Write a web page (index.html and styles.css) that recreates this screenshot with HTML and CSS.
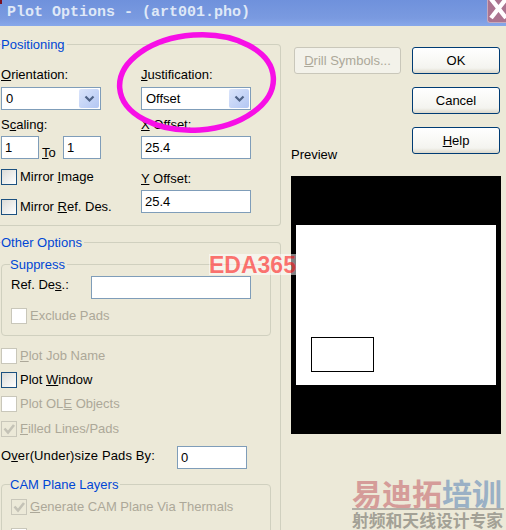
FILE: index.html
```html
<!DOCTYPE html>
<html lang="en">
<head>
<meta charset="utf-8">
<title>Plot Options</title>
<link rel="stylesheet" href="styles.css">
</head>
<body>
<div class="window">
  <header class="titlebar">
    <span class="title">Plot Options - (art001.pho)</span>
    <span class="close"><svg width="19" height="22" viewBox="0 0 19 22"><path d="M3 -1 L18 18 M18 -1 L3 18" stroke="#fff" stroke-width="4.4"/></svg></span>
  </header>
  <main class="content">
    <div class="left">
      <fieldset class="group outer pos">
        <legend>Positioning</legend>
        <div class="pos-grid">
          <div class="col">
            <label class="lbl first"><u>O</u>rientation:</label>
            <div class="select w99 gap-6"><span>0</span><span class="arrow"><svg width="11" height="8" viewBox="0 0 11 8"><path d="M1.5 1.5 L5.5 5.5 L9.5 1.5" fill="none" stroke="#4d6185" stroke-width="2.2"/></svg></span></div>
            <label class="lbl gap-7">S<u>c</u>aling:</label>
            <div class="scale gap-5">
              <div class="input w37">1</div>
              <span class="to"><u>T</u>o</span>
              <div class="input w37">1</div>
            </div>
            <div class="check-row gap-9"><span class="check"></span><span>Mirror <u>I</u>mage</span></div>
            <div class="check-row gap-14"><span class="check"></span><span>Mirror <u>R</u>ef. Des.</span></div>
          </div>
          <div class="col">
            <label class="lbl first"><u>J</u>ustification:</label>
            <div class="select w109 gap-6"><span>Offset</span><span class="arrow"><svg width="11" height="8" viewBox="0 0 11 8"><path d="M1.5 1.5 L5.5 5.5 L9.5 1.5" fill="none" stroke="#4d6185" stroke-width="2.2"/></svg></span></div>
            <label class="lbl gap-7"><u>X</u> Offset:</label>
            <div class="input w109 gap-5">25.4</div>
            <label class="lbl gap-12"><u>Y</u> Offset:</label>
            <div class="input w109 gap-5">25.4</div>
          </div>
        </div>
      </fieldset>
      <fieldset class="group outer other">
        <legend>Other Options</legend>
        <fieldset class="group inner suppress">
          <legend>Suppress</legend>
          <div class="ref-row"><label class="lbl">Ref. De<u>s</u>.:</label><div class="input w159"></div></div>
          <div class="check-row off gap-9"><span class="check"></span><span>Exclude Pads</span></div>
        </fieldset>
        <div class="check-row off gap-12"><span class="check"></span><span><u>P</u>lot Job Name</span></div>
        <div class="check-row gap-8"><span class="check"></span><span>Plot <u>W</u>indow</span></div>
        <div class="check-row off gap-8"><span class="check"></span><span>Plot OL<u>E</u> Objects</span></div>
        <div class="check-row off gap-9"><span class="check"><svg width="14" height="14" viewBox="0 0 14 14"><path d="M2.5 6.5 L6 10.5 L12 3" fill="none" stroke="#c4c2b6" stroke-width="2.6"/></svg></span><span><u>F</u>illed Lines/Pads</span></div>
        <div class="over-row"><label class="lbl">O<u>v</u>er(Under)size Pads By:</label><div class="input w69">0</div></div>
        <fieldset class="group inner cam">
          <legend>CAM Plane Layers</legend>
          <div class="check-row off"><span class="check"><svg width="14" height="14" viewBox="0 0 14 14"><path d="M2.5 6.5 L6 10.5 L12 3" fill="none" stroke="#c4c2b6" stroke-width="2.6"/></svg></span><span><u>G</u>enerate CAM Plane Via Thermals</span></div>
          <div class="check-row off gap-13"><span class="check"></span><span></span></div>
        </fieldset>
      </fieldset>
    </div>
    <div class="right">
      <div class="right-top">
        <div class="right-lead">
          <button class="btn drill" disabled><u>D</u>rill Symbols...</button>
          <span class="preview-label">Preview</span>
        </div>
        <div class="actions">
          <button class="btn">OK</button>
          <button class="btn">Cancel</button>
          <button class="btn"><u>H</u>elp</button>
        </div>
      </div>
      <div class="preview"><div class="sheet"><div class="window-rect"></div></div></div>
    </div>
  </main>
  <div class="corner-mark"></div>
  <svg class="ring" width="506" height="200" viewBox="0 0 506 200"><ellipse cx="196.5" cy="82.5" rx="77" ry="47.5" transform="rotate(-4 196.5 82.5)" fill="none" stroke="#f70fe6" stroke-width="5.5"/></svg>
  <div class="stamp">EDA365</div>
  <div class="brand">
    <div class="brand-top"><span class="pink">易迪拓</span><span class="blue">培训</span></div>
    <div class="brand-sub">射频和天线设计专家</div>
  </div>
</div>
</body>
</html>
```
FILE: styles.css
```css
* { box-sizing: border-box; }
html, body { margin: 0; padding: 0; }
body { background: #ece9d8; }
.window {
  position: relative;
  width: 506px;
  height: 530px;
  overflow: hidden;
  background: #ece9d8;
  font: 13px/14px "Liberation Sans", Arial, sans-serif;
  color: #000;
}
.titlebar {
  height: 26px;
  display: flex;
  justify-content: space-between;
  align-items: flex-start;
  padding-left: 7px;
  background: linear-gradient(#6f91dc 0, #7a9ae0 70%, #87a8ea 100%);
}
.title {
  font: bold 15px/26px "Liberation Mono", monospace;
  height: 26px;
  color: #dfe8f7;
}
.close {
  width: 19px;
  height: 23px;
  background: #ab7490;
  border-radius: 0 0 0 3px;
  border: 1px solid #c6a9bd;
  border-top: 0;
  border-right: 0;
  overflow: hidden;
}
.close svg { display: block; }
.content { display: flex; align-items: flex-start; }
.left { width: 281px; padding-top: 11px; flex: none; }
.right { padding: 21px 0 0 10px; flex: none; width: 220px; }

fieldset.group {
  margin: 0;
  min-width: 0;
  border: 1px solid #d0d0bf;
  border-radius: 4px;
}
fieldset.group legend {
  padding: 0 2px 0 0;
  margin: 0;
  color: #0046d5;
  height: 14px;
  line-height: 16px;
}
fieldset.outer { border-left: 0; border-top-left-radius: 0; border-bottom-left-radius: 0; padding: 0 0 0 1px; }
fieldset.inner { width: 270px; padding: 0 0 0 9px; }
fieldset.group.inner > legend { margin-left: -1px; }

fieldset.pos { padding-top: 16px; height: 189px; }
.pos-grid { display: grid; grid-template-columns: 140px 110px; }
.col { display: flex; flex-direction: column; align-items: flex-start; }
.lbl { display: block; height: 14px; line-height: 16px; white-space: nowrap; }

.gap-5 { margin-top: 5px; }
.gap-6 { margin-top: 6px; }
.gap-7 { margin-top: 7px; }
.gap-8 { margin-top: 8px; }
.gap-9 { margin-top: 9px; }
.gap-12 { margin-top: 12px; }
.gap-13 { margin-top: 13px; }
.gap-14 { margin-top: 14px; }

.input, .select {
  height: 23px;
  background: #fff;
  border: 1px solid #7f9db9;
  display: flex;
  align-items: center;
  padding-left: 3px;
  line-height: 14px;
}
.select { justify-content: space-between; padding: 1px 1px 1px 4px; }
.arrow {
  width: 20px;
  height: 19px;
  border-radius: 2px;
  background: linear-gradient(135deg, #dbe5fb, #b2c6f3);
  display: flex;
  align-items: center;
  justify-content: center;
}
.arrow svg { display: block; }
.w37 { width: 38px; }
.w69 { width: 70px; }
.w99 { width: 100px; }
.w109 { width: 110px; }
.w159 { width: 160px; }
.scale { display: flex; align-items: flex-start; }
.to { width: 24px; padding: 10px 0 0 3px; }

.check-row { display: flex; align-items: center; gap: 3px; height: 16px; white-space: nowrap; }
.check {
  width: 16px;
  height: 16px;
  flex: none;
  border: 1px solid #1c5180;
  background: linear-gradient(135deg, #dcdcd7, #fff);
}
.check svg { display: block; }
.off { color: #aca899; }
.off .check { border-color: #c9c7ba; background: #fff; }
.off .check:has(svg) { background: #ece9d8; }

fieldset.other { margin-top: 9px; height: 400px; padding-top: 8px; }
fieldset.suppress { height: 79px; }
.ref-row { display: flex; align-items: center; justify-content: space-between; width: 240px; margin-top: 5px; }
.ref-row .lbl { margin-top: -7px; }
.over-row { display: flex; align-items: flex-start; justify-content: space-between; width: 246px; margin-top: 9px; }
.over-row .lbl { margin-top: 2px; letter-spacing: .12px; }
fieldset.cam { margin-top: 8px; height: 90px; padding-top: 8px; }

.right-top { display: flex; }
.right-lead { width: 121px; height: 114px; display: flex; flex-direction: column; justify-content: space-between; align-items: flex-start; }
.btn {
  width: 88px;
  height: 27px;
  padding: 0;
  font: inherit;
  color: #000;
  border: 1px solid #003c74;
  border-radius: 3px;
  background: linear-gradient(#fff, #f4f4ef 80%, #dcd8cb);
}
.btn[disabled] { color: #aca899; border-color: #c9c7ba; background: #f3f2ea; }
.drill { width: 107px; margin-left: 3px; }
.preview-label { display: block; height: 14px; line-height: 16px; }
.actions { display: flex; flex-direction: column; gap: 13px; }
.preview { margin-top: 15px; width: 210px; height: 258px; background: #000; padding: 49px 5px 0; }
.sheet { width: 200px; height: 160px; background: #fff; padding: 112px 0 0 15px; }
.window-rect { width: 63px; height: 35px; border: 1px solid #000; }

.corner-mark { position: absolute; left: 0; top: 0; width: 2px; height: 4px; background: #7a1020; }
.ring { position: absolute; left: 0; top: 0; pointer-events: none; }
.stamp {
  position: absolute;
  left: 209px;
  top: 254px;
  width: 87px;
  height: 21px;
  font: bold 23px/23px "Liberation Sans", Arial, sans-serif;
  color: rgba(255, 0, 0, .55);
  background: rgba(255, 255, 255, .5);
  white-space: nowrap;
}
.brand { position: absolute; left: 352px; top: 477px; width: 152px; }
.brand-top {
  font: bold 30px/30px "Noto Sans CJK SC", sans-serif;
  border-bottom: 2px solid #b2afa6;
  white-space: nowrap;
  height: 33px;
}
.pink { color: #d59c99; }
.blue { color: #9ab0c5; }
.brand-sub {
  font: bold 16.8px/20px "Noto Sans CJK SC", sans-serif;
  color: #a3a196;
  white-space: nowrap;
}
```
